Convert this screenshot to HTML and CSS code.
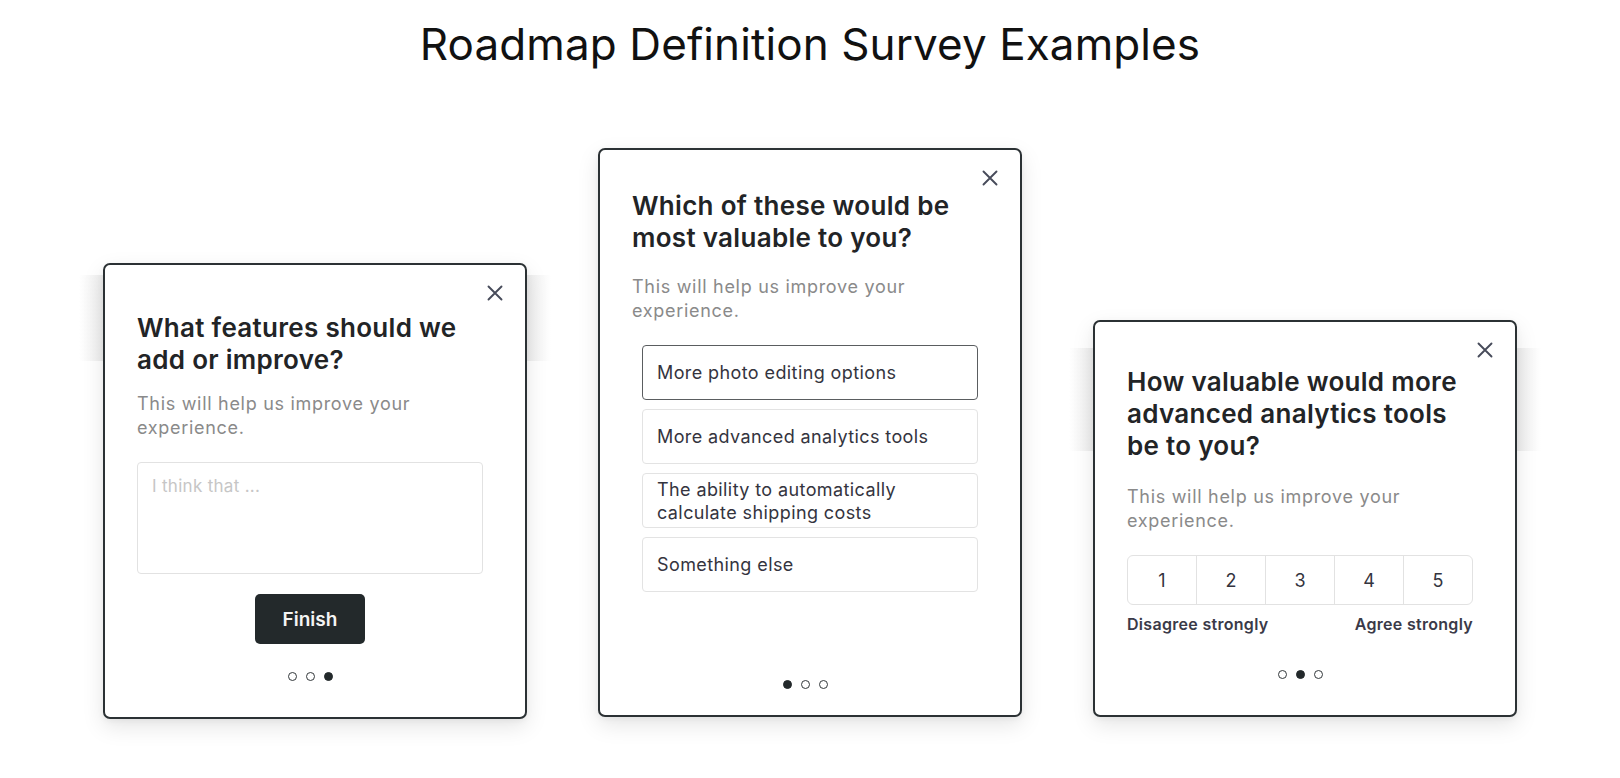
FILE: index.html
```html
<!DOCTYPE html>
<html lang="en">
<head>
<meta charset="utf-8">
<title>Roadmap Definition Survey Examples</title>
<link rel="stylesheet" href="styles.css">
</head>
<body>
<h1 class="page-title">Roadmap Definition Survey Examples</h1>
<main class="cards">
  <section class="card card-text">
    <button class="close" aria-label="Close"><svg viewBox="0 0 16 16" width="16" height="16"><path d="M1.5 1.5L14.5 14.5M14.5 1.5L1.5 14.5"/></svg></button>
    <h2 class="q-title">What features should we<br>add or improve?</h2>
    <p class="q-sub">This will help us improve your<br>experience.</p>
    <div class="textarea">I think that ...</div>
    <button class="finish">Finish</button>
    <div class="dots"><span class="dot"></span><span class="dot"></span><span class="dot on"></span></div>
  </section>

  <section class="card card-choice">
    <button class="close" aria-label="Close"><svg viewBox="0 0 16 16" width="16" height="16"><path d="M1.5 1.5L14.5 14.5M14.5 1.5L1.5 14.5"/></svg></button>
    <h2 class="q-title">Which of these would be<br>most valuable to you?</h2>
    <p class="q-sub">This will help us improve your<br>experience.</p>
    <div class="options">
      <div class="option selected">More photo editing options</div>
      <div class="option">More advanced analytics tools</div>
      <div class="option">The ability to automatically<br>calculate shipping costs</div>
      <div class="option">Something else</div>
    </div>
    <div class="dots"><span class="dot on"></span><span class="dot"></span><span class="dot"></span></div>
  </section>

  <section class="card card-scale">
    <button class="close" aria-label="Close"><svg viewBox="0 0 16 16" width="16" height="16"><path d="M1.5 1.5L14.5 14.5M14.5 1.5L1.5 14.5"/></svg></button>
    <h2 class="q-title">How valuable would more<br>advanced analytics tools<br>be to you?</h2>
    <p class="q-sub">This will help us improve your<br>experience.</p>
    <div class="scale">
      <span class="cell">1</span><span class="cell">2</span><span class="cell">3</span><span class="cell">4</span><span class="cell">5</span>
    </div>
    <div class="scale-labels"><span>Disagree strongly</span><span>Agree strongly</span></div>
    <div class="dots"><span class="dot"></span><span class="dot on"></span><span class="dot"></span></div>
  </section>
</main>
</body>
</html>
```

FILE: styles.css
```css
* { box-sizing: border-box; }
html { background: #fff; }
html, body { margin: 0; padding: 0; }
body {
  font-family: "Inter", "Liberation Sans", sans-serif;
  color: #222;
  width: 1620px;
  height: 778px;
  overflow: hidden;
}
.page-title {
  margin: 18px 0 0;
  height: 52px;
  font-size: 44px;
  line-height: 52px;
  font-weight: 400;
  text-align: center;
  color: #111;
  letter-spacing: 0.1px;
}
.cards {
  display: flex;
  justify-content: center;
  align-items: flex-end;
  gap: 71px;
  margin-top: 79px;
  height: 568px;
}
.card {
  position: relative;
  width: 424px;
  background: #fff;
  border: 2px solid #2b3134;
  border-radius: 7px;
  box-shadow: 0 8px 22px rgba(0, 0, 0, 0.10), 0 2px 6px rgba(0, 0, 0, 0.05);
  padding: 44px 42px 0 32px;
  display: flex;
  flex-direction: column;
}
.card::before {
  content: "";
  position: absolute;
  left: -26px;
  right: -26px;
  z-index: -1;
  background: linear-gradient(to right, rgba(237,237,237,0), #ededed 24px, #ededed calc(100% - 24px), rgba(237,237,237,0));
}
.card-choice::before { display: none; }
.card-text { height: 456px; padding-top: 47px; padding-bottom: 36px; margin-bottom: -2px; }
.card-text::before { top: 10px; height: 86px; }
.card-choice { height: 569px; padding-top: 40px; padding-bottom: 26px; }
.card-scale { height: 397px; padding-top: 44px; padding-bottom: 36px; }
.card-scale::before { top: 26px; height: 103px; }

.close {
  position: absolute;
  top: 20px;
  right: 22px;
  width: 16px;
  height: 16px;
  padding: 0;
  border: 0;
  background: none;
  display: block;
}
.close svg { display: block; }
.close path { stroke: #474b5a; stroke-width: 1.9; fill: none; stroke-linecap: round; }

.q-title {
  margin: 0;
  font-size: 26px;
  line-height: 32px;
  font-weight: 600;
  color: #222426;
  letter-spacing: 0.3px;
}
.q-sub {
  margin: 16px 0 0;
  font-size: 18px;
  line-height: 24px;
  color: #8a8a8a;
  font-weight: 400;
  letter-spacing: 0.7px;
}
.card-choice .q-sub { margin-top: 21px; }
.card-scale .q-sub { margin-top: 23px; }

.textarea {
  margin-top: 22px;
  height: 112px;
  border: 1.5px solid #e2e2e2;
  border-radius: 4px;
  padding: 12px 14px;
  font-size: 17px;
  line-height: 22px;
  letter-spacing: 0.3px;
  color: #c6c6c6;
}
.finish {
  align-self: center;
  margin-top: 20px;
  width: 110px;
  height: 50px;
  border: 0;
  border-radius: 5px;
  background: #23292b;
  color: #f4f4f4;
  font-family: inherit;
  font-size: 19px;
  font-weight: 600;
}
.dots {
  display: flex;
  justify-content: center;
  gap: 9px;
  margin-top: auto;
}
.dot {
  width: 9px;
  height: 9px;
  border-radius: 50%;
  border: 1.5px solid #33383b;
  background: #fff;
}
.dot.on { background: #23292b; border-color: #23292b; }

.options {
  margin: 22px 0 0 10px;
  display: flex;
  flex-direction: column;
  gap: 9px;
}
.option {
  height: 55px;
  border: 1.5px solid #e3e3e3;
  border-radius: 4px;
  padding: 0 14px;
  display: flex;
  align-items: center;
  font-size: 18px;
  line-height: 23px;
  letter-spacing: 0.4px;
  color: #34343e;
}
.option.selected { border-color: #5a5d60; }

.scale {
  margin-top: 22px;
  height: 50px;
  display: flex;
  border: 1.5px solid #e2e2e2;
  border-radius: 6px;
}
.cell {
  flex: 1;
  display: flex;
  align-items: center;
  justify-content: center;
  font-size: 18px;
  color: #34343e;
  border-left: 1.5px solid #e2e2e2;
}
.cell:first-child { border-left: 0; }
.scale-labels {
  margin-top: 9px;
  display: flex;
  justify-content: space-between;
  font-size: 16px;
  line-height: 20px;
  font-weight: 600;
  letter-spacing: 0.3px;
  color: #3a3a48;
}
```
